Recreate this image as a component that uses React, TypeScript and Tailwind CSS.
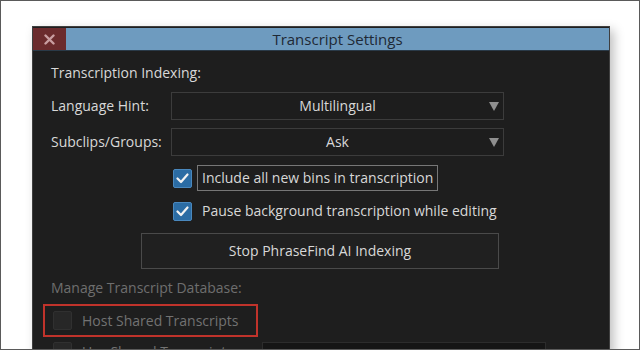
const font = { fontFamily: '"Open Sans", "Noto Sans", sans-serif' };

const Check = ({ on }: { on: boolean }) =>
  on ? (
    <div className="shrink-0 w-[19px] h-[19px] rounded-[2px] bg-[#2b6ca4] border border-[#4a88bd] flex items-center justify-center">
      <svg width="13" height="11" viewBox="0 0 13 11">
        <path d="M1.5 5.5 L5 9 L11.5 1.5" stroke="#f2f2f2" strokeWidth="2.2" fill="none" strokeLinecap="round" strokeLinejoin="round" />
      </svg>
    </div>
  ) : (
    <div className="shrink-0 w-[19px] h-[19px] rounded-[2px] bg-[#272727] border border-[#303030]" />
  );

const Select = ({ value }: { value: string }) => (
  <div className="relative w-[333px] h-[28px] border border-[#3c3c3c] bg-[#1d1d1d] flex items-center justify-center text-[14px] text-[#d8d8d8]">
    {value}
    <svg className="absolute right-[4px] top-[9px]" width="10" height="9" viewBox="0 0 10 9">
      <path d="M0 0 H10 L5 9 Z" fill="#8f8f8f" />
    </svg>
  </div>
);

const App = () => {
  return (
    <div style={font} className="w-[640px] h-[350px] bg-white border border-[#5a5a5a] overflow-hidden pl-[31px] pt-[25px]">
      <div className="w-[578px] h-[340px] bg-[#1e1e1e] border border-[#3f3f3f] shadow-[4px_4px_10px_rgba(0,0,0,0.25)] flex flex-col">
        <div className="shrink-0 h-[23px] flex bg-[#6e9bbf] border-b border-[#2a3a48] mt-[1px]">
          <div className="w-[33px] h-full bg-[#6b2b2d] flex items-center justify-center">
            <svg width="11" height="11" viewBox="0 0 11 11">
              <path d="M1.5 1.5 L9.5 9.5 M9.5 1.5 L1.5 9.5" stroke="#c99ea1" strokeWidth="2.4" strokeLinecap="round" />
            </svg>
          </div>
          <div className="flex-1 flex items-center justify-center text-[15px] text-[#1e2935] leading-none">
            Transcript Settings
          </div>
        </div>

        <div className="shrink-0 pl-[18px] text-[14px] text-[#d8d8d8] leading-none">
          <div className="mt-[13px] h-[18px] flex items-center">Transcription Indexing:</div>

          <div className="mt-[10px] flex items-center">
            <div className="w-[120px]">Language Hint:</div>
            <Select value="Multilingual" />
          </div>

          <div className="mt-[8px] flex items-center">
            <div className="w-[120px]">Subclips/Groups:</div>
            <Select value="Ask" />
          </div>

          <div className="mt-[9px] flex items-center pl-[122px] gap-[5px]">
            <Check on />
            <div className="h-[26px] px-[4px] flex items-center border border-[#777]">Include all new bins in transcription</div>
          </div>

          <div className="mt-[8px] flex items-center pl-[122px] gap-[10px] h-[24px]">
            <Check on />
            <div>Pause background transcription while editing</div>
          </div>

          <div className="mt-[10px] ml-[90px] w-[358px] h-[36px] border border-[#4a4a4a] bg-[#202020] flex items-center justify-center">
            Stop PhraseFind AI Indexing
          </div>

          <div className="mt-[11px] h-[16px] flex items-center text-[#6e6e6e]">Manage Transcript Database:</div>

          <div className="mt-[8px] -ml-[8px] w-[215px] h-[33px] border-2 border-[#c0332b] flex items-center gap-[10px] pl-[8px] text-[#727272]">
            <Check on={false} />
            <div>Host Shared Transcripts</div>
          </div>

          <div className="mt-[5px] ml-[2px] flex items-start text-[#727272]">
            <Check on={false} />
            <div className="ml-[10px] w-[180px] pt-[3px]">Use Shared Transcripts:</div>
            <div className="w-[284px] h-[28px] bg-[#151515] border border-[#2c2c2c] pl-[8px] pt-[5px]">No host selected</div>
          </div>
        </div>
      </div>
    </div>
  );
};

export default App;
